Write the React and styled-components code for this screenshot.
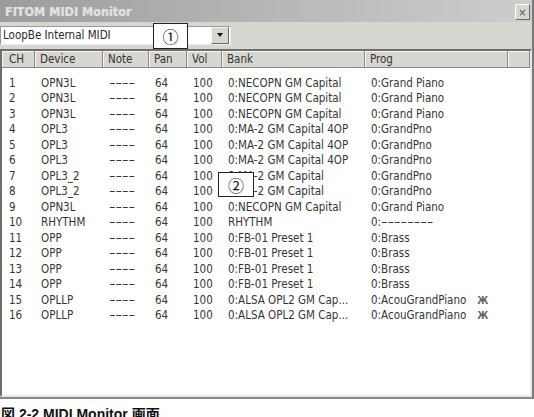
import React from 'react';
import styled, { createGlobalStyle } from 'styled-components';

const GlobalStyle = createGlobalStyle`
  html, body {
    margin: 0;
    padding: 0;
    background: #ffffff;
  }
  body {
    width: 534px;
    height: 417px;
    overflow: hidden;
    font-family: "DejaVu Sans Condensed", "DejaVu Sans", sans-serif;
  }
`;

const Page = styled.div`
  position: relative;
  width: 534px;
  height: 417px;
  overflow: hidden;
`;

const Window = styled.div`
  display: flex;
  flex-direction: column;
  width: 534px;
  height: 399px;
  box-sizing: border-box;
  background: #d8d6d1;
  border-right: 2px solid #7a7a78;
  border-bottom: 2px solid #8a8a88;
`;

const TitleBar = styled.div`
  display: flex;
  align-items: center;
  justify-content: space-between;
  height: 22px;
  padding: 0 2px 0 5px;
  background: linear-gradient(to right, #9c9c9c 0%, #b4b4b4 45%, #cdcdcd 100%);
`;

const Title = styled.span`
  font-family: "DejaVu Sans Condensed", "DejaVu Sans", sans-serif;
  font-weight: bold;
  font-size: 12.5px;
  color: #e2e2e2;
  text-shadow: 0 0 1px #c8c8c8;
`;

const CloseButton = styled.div`
  display: flex;
  align-items: center;
  justify-content: center;
  width: 13px;
  height: 14px;
  margin-top: 2px;
  background: #d8d6d1;
  border: 1px solid;
  border-color: #ffffff #6a6a6a #6a6a6a #ffffff;
  color: #555;
  font-size: 11px;
  line-height: 1;
`;

const Toolbar = styled.div`
  display: flex;
  align-items: center;
  height: 26px;
`;

const Combo = styled.div`
  display: flex;
  align-items: center;
  width: 231px;
  height: 19px;
  box-sizing: border-box;
  background: #ffffff;
  border: 1px solid;
  border-color: #9a9a9a #eeeeee #eeeeee #9a9a9a;
`;

const ComboText = styled.span`
  flex: 1;
  padding-left: 2px;
  font-size: 11.5px;
  color: #2a2a2a;
`;

const ComboButton = styled.div`
  display: flex;
  align-items: center;
  justify-content: center;
  width: 16px;
  height: 15px;
  margin-right: 1px;
  background: #d8d6d1;
  border: 1px solid;
  border-color: #f4f4f4 #6a6a6a #6a6a6a #f4f4f4;
`;

const Arrow = styled.span`
  width: 0;
  height: 0;
  border-left: 3.5px solid transparent;
  border-right: 3.5px solid transparent;
  border-top: 4px solid #111;
`;

const ListView = styled.div`
  flex: 1;
  margin-top: 1px;
  background: #ffffff;
  border: 2px solid;
  border-color: #6e6e6c #e8e8e6 #e8e8e6 #6e6e6c;
  display: flex;
  flex-direction: column;
`;

const columns = '33px 68px 46px 38px 35px 143px 143px 1fr';

const HeaderRow = styled.div`
  display: grid;
  grid-template-columns: ${columns};
  height: 17px;
`;

const HeaderCell = styled.div`
  display: flex;
  align-items: center;
  padding-left: ${p => (p.$first ? 7 : 5)}px;
  background: #d8d6d1;
  border-right: 1px solid #8a8a88;
  border-bottom: 1px solid #8a8a88;
  box-shadow: inset 1px 1px 0 #f6f6f4;
  font-size: 11.5px;
  color: #333;
`;

const Rows = styled.div`
  padding-top: 7px;
`;

const Row = styled.div`
  display: grid;
  grid-template-columns: ${columns};
  height: 15.5px;
  align-items: center;
`;

const Cell = styled.span`
  padding-left: ${p => (p.$first ? 7 : 6)}px;
  font-size: 11.5px;
  color: #353535;
  white-space: nowrap;
`;

const Dashes = styled.span`
  display: inline-block;
  transform: scaleX(1.75);
  transform-origin: left center;
`;

const Mark = styled.span`
  margin-left: 11px;
  font-size: 10px;
  font-weight: bold;
  color: #666;
`;

const Caption = styled.div`
  padding: 4px 0 0 1px;
  font-family: "Liberation Sans", "Noto Sans CJK JP", sans-serif;
  font-weight: bold;
  font-size: 14px;
  color: #111;
  white-space: nowrap;
`;

const Callout = styled.div`
  position: absolute;
  left: ${p => p.$x}px;
  top: ${p => p.$y}px;
  width: ${p => p.$w}px;
  height: ${p => p.$h}px;
  box-sizing: border-box;
  display: flex;
  align-items: center;
  justify-content: center;
  background: #ffffff;
  border: 1px solid #222;
  font-family: "Noto Sans CJK JP", sans-serif;
  font-size: 16px;
  color: #111;
`;

const data = [
  ['1', 'OPN3L', '64', '100', '0:NECOPN GM Capital', '0:Grand Piano'],
  ['2', 'OPN3L', '64', '100', '0:NECOPN GM Capital', '0:Grand Piano'],
  ['3', 'OPN3L', '64', '100', '0:NECOPN GM Capital', '0:Grand Piano'],
  ['4', 'OPL3', '64', '100', '0:MA-2 GM Capital 4OP', '0:GrandPno'],
  ['5', 'OPL3', '64', '100', '0:MA-2 GM Capital 4OP', '0:GrandPno'],
  ['6', 'OPL3', '64', '100', '0:MA-2 GM Capital 4OP', '0:GrandPno'],
  ['7', 'OPL3_2', '64', '100', '0:MA-2 GM Capital', '0:GrandPno'],
  ['8', 'OPL3_2', '64', '100', '0:MA-2 GM Capital', '0:GrandPno'],
  ['9', 'OPN3L', '64', '100', '0:NECOPN GM Capital', '0:Grand Piano'],
  ['10', 'RHYTHM', '64', '100', 'RHYTHM', null],
  ['11', 'OPP', '64', '100', '0:FB-01 Preset 1', '0:Brass'],
  ['12', 'OPP', '64', '100', '0:FB-01 Preset 1', '0:Brass'],
  ['13', 'OPP', '64', '100', '0:FB-01 Preset 1', '0:Brass'],
  ['14', 'OPP', '64', '100', '0:FB-01 Preset 1', '0:Brass'],
  ['15', 'OPLLP', '64', '100', '0:ALSA OPL2 GM Cap...', '0:AcouGrandPiano', true],
  ['16', 'OPLLP', '64', '100', '0:ALSA OPL2 GM Cap...', '0:AcouGrandPiano', true],
];

const headers = ['CH', 'Device', 'Note', 'Pan', 'Vol', 'Bank', 'Prog', ''];

export default function App() {
  return (
    <Page>
      <GlobalStyle />
      <Window>
        <TitleBar>
          <Title>FITOM MIDI Monitor</Title>
          <CloseButton>×</CloseButton>
        </TitleBar>
        <Toolbar>
          <Combo>
            <ComboText>LoopBe Internal MIDI</ComboText>
            <ComboButton>
              <Arrow />
            </ComboButton>
          </Combo>
        </Toolbar>
        <ListView>
          <HeaderRow>
            {headers.map((h, i) => (
              <HeaderCell key={i} $first={i === 0}>{h}</HeaderCell>
            ))}
          </HeaderRow>
          <Rows>
            {data.map(([ch, dev, pan, vol, bank, prog, mark]) => (
              <Row key={ch}>
                <Cell $first>{ch}</Cell>
                <Cell>{dev}</Cell>
                <Cell><Dashes>----</Dashes></Cell>
                <Cell>{pan}</Cell>
                <Cell>{vol}</Cell>
                <Cell>{bank}</Cell>
                <Cell>
                  {prog === null ? (
                    <>0:<Dashes>--------</Dashes></>
                  ) : (
                    prog
                  )}
                  {mark && <Mark>Ж</Mark>}
                </Cell>
              </Row>
            ))}
          </Rows>
        </ListView>
      </Window>
      <Caption>図 2-2 MIDI Monitor 画面</Caption>
      <Callout $x={153} $y={23} $w={35} $h={26}>①</Callout>
      <Callout $x={218} $y={172} $w={36} $h={25}>②</Callout>
    </Page>
  );
}
